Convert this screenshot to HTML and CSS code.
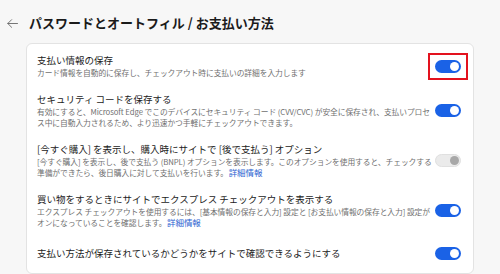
FILE: index.html
```html
<!DOCTYPE html>
<html lang="ja">
<head>
<meta charset="utf-8">
<title>お支払い方法</title>
<link rel="stylesheet" href="styles.css">
</head>
<body>
<header class="top">
  <span class="back" aria-label="戻る">
    <svg width="11" height="9" viewBox="0 0 11 9" fill="none" stroke="#666" stroke-width="0.9" stroke-linecap="round" stroke-linejoin="round"><path d="M10.5 4.5H0.8M4.6 0.7L0.8 4.5L4.6 8.3"/></svg>
  </span>
  <h1 class="page-title">パスワードとオートフィル / お支払い方法</h1>
</header>
<section class="card">
  <div class="row">
    <div class="text">
      <div class="row-title">支払い情報の保存</div>
      <div class="desc">カード情報を自動的に保存し、チェックアウト時に支払いの詳細を入力します</div>
    </div>
    <span class="toggle on marked"></span>
  </div>
  <div class="row">
    <div class="text">
      <div class="row-title">セキュリティ コードを保存する</div>
      <div class="desc">有効にすると、Microsoft Edge でこのデバイスにセキュリティ コード (CVV/CVC) が安全に保存され、支払いプロセス中に自動入力されるため、より迅速かつ手軽にチェックアウトできます。</div>
    </div>
    <span class="toggle on"></span>
  </div>
  <div class="row">
    <div class="text">
      <div class="row-title">[今すぐ購入] を表示し、購入時にサイトで [後で支払う] オプション</div>
      <div class="desc">[今すぐ購入] を表示し、後で支払う (BNPL) オプションを表示します。このオプションを使用すると、チェックする準備ができたら、後日購入に対して支払いを行います。 <a class="link" href="#">詳細情報</a></div>
    </div>
    <span class="toggle off"></span>
  </div>
  <div class="row">
    <div class="text">
      <div class="row-title">買い物をするときにサイトでエクスプレス チェックアウトを表示する</div>
      <div class="desc">エクスプレス チェックアウトを使用するには、[基本情報の保存と入力] 設定と [お支払い情報の保存と入力] 設定がオンになっていることを確認します。 <a class="link" href="#">詳細情報</a></div>
    </div>
    <span class="toggle on"></span>
  </div>
  <div class="row single">
    <div class="text">
      <div class="row-title">支払い方法が保存されているかどうかをサイトで確認できるようにする</div>
    </div>
    <span class="toggle on"></span>
  </div>
</section>
</body>
</html>
```
FILE: styles.css
```css
html, body {
  margin: 0;
  padding: 0;
}
body {
  background: #f7f7f7;
  font-family: "Noto Sans CJK JP", sans-serif;
  color: #1b1b1b;
  width: 500px;
  height: 274px;
  overflow: hidden;
}
.top {
  display: flex;
  align-items: center;
  height: 18px;
  margin: 14px 0 11px;
  padding-left: 7px;
}
.back {
  display: flex;
  width: 11px;
  height: 9px;
  margin-right: 11px;
}
.page-title {
  margin: 0;
  font-size: 13px;
  line-height: 18px;
  font-weight: 700;
  color: #1b1b1b;
}
.card {
  margin-left: 26px;
  width: 448px;
  box-sizing: border-box;
  background: #fff;
  border: 1px solid #e3e3e3;
  border-radius: 6px;
  padding: 10px 12px 13px 10px;
  display: flex;
  flex-direction: column;
  gap: 14px;
}
.row {
  display: flex;
  align-items: center;
}
.row.single {
  padding-top: 4px;
}
.text {
  flex: 1;
  min-width: 0;
  margin-right: 1px;
}
.row-title {
  font-size: 9.5px;
  line-height: 13px;
  color: #1b1b1b;
}
.desc {
  font-size: 7.75px;
  line-height: 11.5px;
  letter-spacing: -0.07px;
  color: #707070;
}
.link {
  font-size: 8.5px;
  color: #2b63d1;
  text-decoration: none;
  margin-left: -1px;
}
.toggle {
  flex: none;
  position: relative;
  width: 26px;
  height: 13px;
  border-radius: 7px;
  box-sizing: border-box;
}
.toggle::after {
  content: "";
  position: absolute;
  top: 2px;
  right: 2px;
  width: 9px;
  height: 9px;
  border-radius: 50%;
}
.toggle.on {
  background: #1a62e6;
}
.toggle.on::after {
  background: #fff;
}
.toggle.off {
  background: #ebebeb;
  border: 1px solid #e0e0e0;
}
.toggle.off::after {
  top: 1px;
  right: 1px;
  background: #a8a8a8;
}
.marked::before {
  content: "";
  position: absolute;
  top: -7px;
  bottom: -7px;
  left: -7px;
  right: -7px;
  border: 2px solid #e3121e;
}
```
